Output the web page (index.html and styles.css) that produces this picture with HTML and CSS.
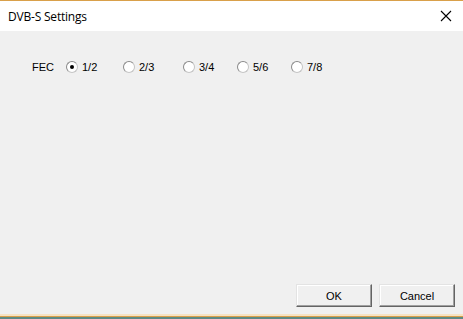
FILE: index.html
```html
<!DOCTYPE html>
<html>
<head>
<meta charset="utf-8">
<link rel="stylesheet" href="styles.css">
</head>
<body>
<div class="window">
  <div class="titlebar">
    <span class="title">DVB-S Settings</span>
    <svg class="close" width="12" height="12" viewBox="0 0 12 12"><path d="M1 1 L11 11 M11 1 L1 11" stroke="#000" stroke-width="1.1" fill="none"/></svg>
  </div>
  <div class="content">
    <div class="fec-row">
      <span class="fec-label">FEC</span>
      <div class="options">
        <label class="opt"><span class="radio checked"></span><span>1/2</span></label>
        <label class="opt"><span class="radio"></span><span>2/3</span></label>
        <label class="opt"><span class="radio"></span><span>3/4</span></label>
        <label class="opt"><span class="radio"></span><span>5/6</span></label>
        <label class="opt"><span class="radio"></span><span>7/8</span></label>
      </div>
    </div>
    <div class="buttons">
      <button class="btn">OK</button>
      <button class="btn">Cancel</button>
    </div>
  </div>
  <div class="taskbar-edge">
    <div class="peach"></div>
    <div class="orange"></div>
    <div class="teal"></div>
  </div>
</div>
</body>
</html>
```
FILE: styles.css
```css
html, body {
  margin: 0;
  padding: 0;
  width: 463px;
  height: 319px;
  overflow: hidden;
  background: #f0f0f0;
}
.window {
  width: 463px;
  height: 319px;
  display: flex;
  flex-direction: column;
  border-top: 1px solid #d9a04a;
  box-sizing: border-box;
}
.titlebar {
  height: 30px;
  background: #ffffff;
  display: flex;
  align-items: center;
  justify-content: space-between;
  padding: 0 11px 0 8px;
  flex: none;
}
.title {
  font-family: "Open Sans", "Noto Sans", sans-serif;
  font-size: 12px;
  color: #000;
  letter-spacing: -0.2px;
}
.close {
  display: block;
}
.content {
  flex: 1;
  display: flex;
  flex-direction: column;
  justify-content: space-between;
  font-family: "Liberation Sans", Arial, sans-serif;
  font-size: 11px;
  color: #000;
  padding: 29px 8px 7px 32px;
}
.fec-row {
  display: flex;
  align-items: center;
  height: 14px;
}
.fec-label {
  width: 34px;
}
.options {
  display: grid;
  grid-template-columns: 57px 60px 54px 54px auto;
  align-items: center;
}
.opt {
  display: flex;
  align-items: center;
  gap: 4px;
}
.radio {
  width: 10px;
  height: 10px;
  border-radius: 50%;
  background: #fff;
  border: 1px solid #c4c4c4;
  border-top-color: #8a8a8a;
  border-left-color: #8a8a8a;
  box-sizing: content-box;
  position: relative;
}
.radio.checked::after {
  content: "";
  position: absolute;
  left: 3px;
  top: 3px;
  width: 4px;
  height: 4px;
  border-radius: 50%;
  background: #000;
}
.buttons {
  display: flex;
  justify-content: flex-end;
  gap: 7px;
}
.btn {
  width: 76px;
  height: 23px;
  margin: 0;
  padding: 1px 0 0 0;
  font-family: "Liberation Sans", Arial, sans-serif;
  font-size: 11px;
  color: #000;
  background: #f0f0f0;
  border: 1px solid;
  border-color: #e3e3e3 #646464 #646464 #e3e3e3;
  box-shadow: inset -1px -1px 0 #a0a0a0, inset 1px 1px 0 #ffffff;
}
.taskbar-edge {
  flex: none;
  display: flex;
  flex-direction: column;
}
.peach { height: 2px; background: #f6e3c4; }
.orange { height: 1px; background: #d9a04a; }
.teal { height: 2px; background: #5f8a84; }
```
